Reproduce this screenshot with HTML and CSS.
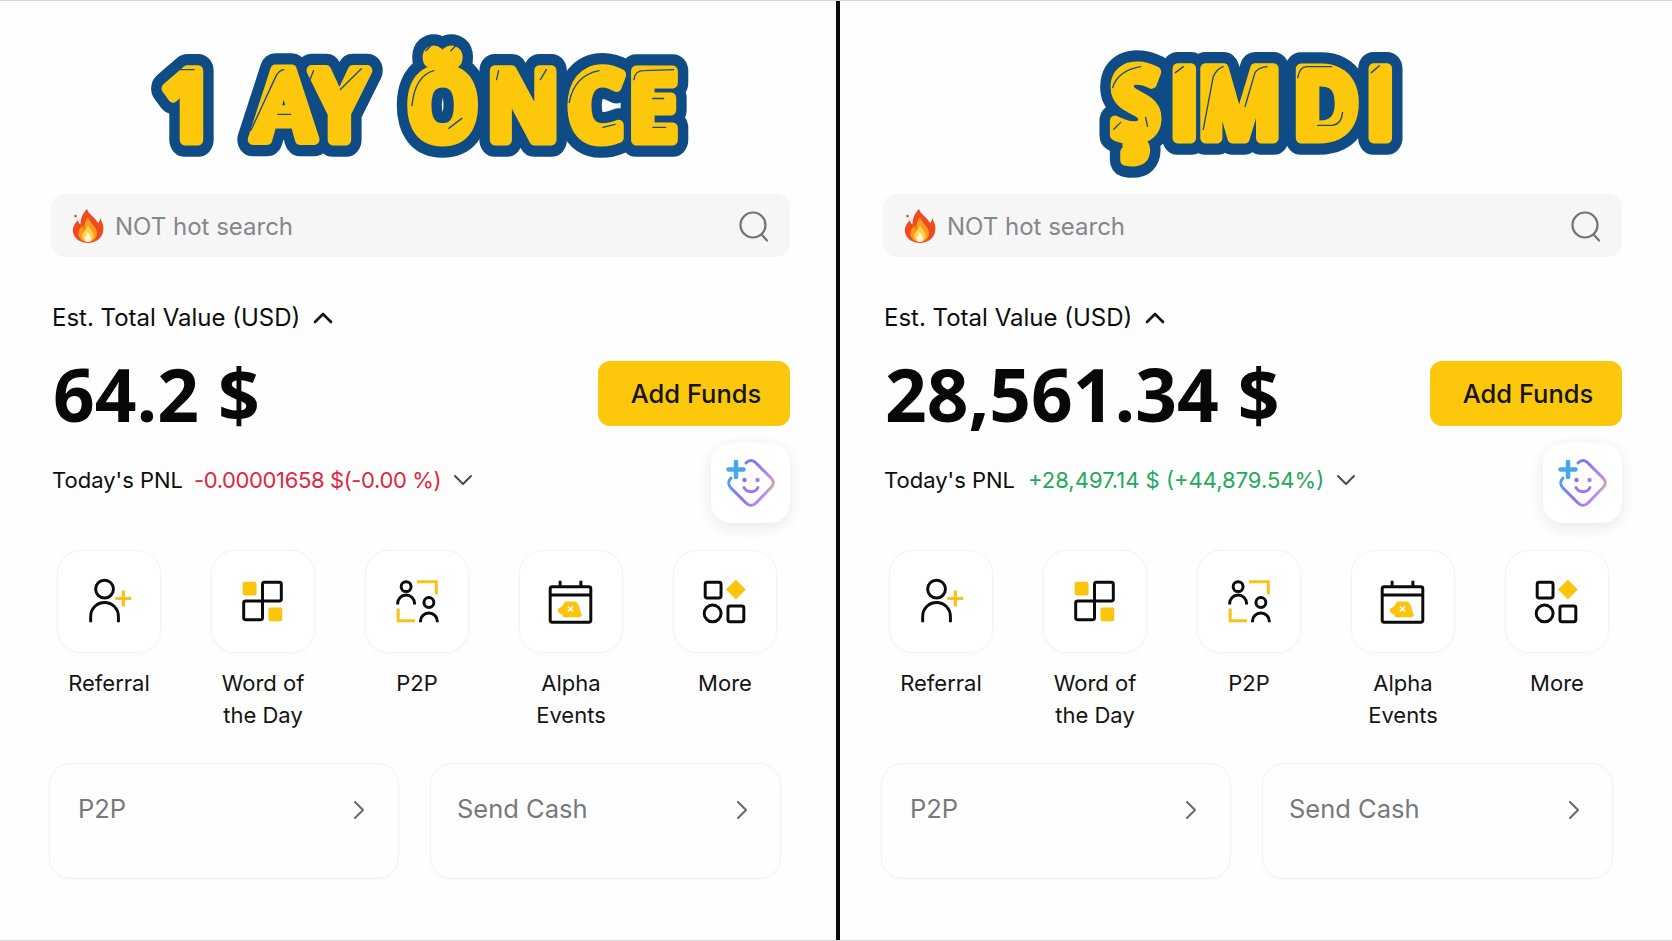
FILE: index.html
```html
<!DOCTYPE html>
<html lang="tr">
<head>
<meta charset="utf-8">
<title>1 Ay Önce / Şimdi</title>
<link rel="stylesheet" href="styles.css">
</head>
<body>
<svg class="sprites" width="0" height="0" aria-hidden="true">
  <defs>
    <linearGradient id="aiGrad" gradientUnits="userSpaceOnUse" x1="16" y1="30" x2="64" y2="50">
      <stop offset="0" stop-color="#45a8ee"/>
      <stop offset=".45" stop-color="#8f6ff0"/>
      <stop offset=".8" stop-color="#b98af0"/>
      <stop offset="1" stop-color="#f3bd6a"/>
    </linearGradient>
    <symbol id="i-flame" viewBox="0 0 32 36">
      <path fill="#ef4b1f" d="M15 1c2 6 8 8 11 14 1.500-1 2-3 2-5 3 5 4 9 3 14-1.500 7-8 11-15 11S2 31 1 24c-.7-5 2-9 5-12 .3 2 1 3.500 2.500 4.500C8.500 10 11 5 15 1z"/>
      <path fill="#fb9a1c" d="M16 9c1 5 8 9 9 15 .8 6-4 10-9.500 10S6 30 6.500 24.500c.3-3 2-5 4-7 0 2 .7 3 2 3.500C12 16.500 13 12.500 16 9z"/>
      <path fill="#ffd54a" d="M16 17c1 4 5 6 5.500 10 .4 4-2.500 7-5.700 7s-6-3-5.500-6.500c.4-3 2.500-4 3.500-6 .6-1.500 1.700-3 2.700-4.500z"/>
      <path fill="#fff8e0" d="M16 24c.6 2.500 3 4 3 6.500 0 2-1.500 3.500-3.200 3.500s-3.300-1.500-3-3.800c.3-2.200 2.400-3.700 3.200-6.200z"/>
      <circle cx="3.500" cy="8" r="1.300" fill="#ef4b1f"/>
    </symbol>
    <symbol id="i-search" viewBox="0 0 32 32">
      <circle cx="15" cy="15" r="12.500" fill="none" stroke="#6f7175" stroke-width="2.200"/>
      <path d="M24 25l5 5.500" fill="none" stroke="#6f7175" stroke-width="2.200" stroke-linecap="round"/>
    </symbol>
    <symbol id="i-up" viewBox="0 0 20 12">
      <path d="M2 10l8-8 8 8" fill="none" stroke="currentColor" stroke-width="2.600" stroke-linecap="round" stroke-linejoin="round"/>
    </symbol>
    <symbol id="i-down" viewBox="0 0 20 12">
      <path d="M2 2l8 8 8-8" fill="none" stroke="currentColor" stroke-width="2" stroke-linecap="round" stroke-linejoin="round"/>
    </symbol>
    <symbol id="i-right" viewBox="0 0 12 20">
      <path d="M2 2l8 8-8 8" fill="none" stroke="currentColor" stroke-width="2" stroke-linecap="round" stroke-linejoin="round"/>
    </symbol>
    <symbol id="i-ai" viewBox="0 0 80 80">
      <path d="M35 19c3-3.500 7-3.500 10 0l15 15c3 3 3 6.500 0 9.500L45 59c-3 3-7 3-10 0L20 44c-3-3-3-7 0-10" fill="none" stroke="url(#aiGrad)" stroke-width="3" stroke-linecap="round"/>
      <path d="M25 18v15M17.500 25.500h15" fill="none" stroke="#45a8ee" stroke-width="4.500" stroke-linecap="round"/>
      <circle cx="33.500" cy="36" r="2.200" fill="#8f6ff0"/>
      <circle cx="46.500" cy="36" r="2.200" fill="#a57ef0"/>
      <path d="M33 43.500c2.500 5.500 11.500 5.500 14 0" fill="none" stroke="#9a74f0" stroke-width="3" stroke-linecap="round"/>
    </symbol>
    <symbol id="i-referral" viewBox="0 0 104 104">
      <circle cx="47.500" cy="39.500" r="9" fill="none" stroke="#0b0b0b" stroke-width="3"/>
      <path d="M33.500 73v-6a14 14 0 0 1 28 0v6" fill="none" stroke="#0b0b0b" stroke-width="3"/>
      <path d="M66.500 41v16M58.500 49h16" fill="none" stroke="#f7c21c" stroke-width="3.200"/>
    </symbol>
    <symbol id="i-word" viewBox="0 0 104 104">
      <rect x="51.500" y="32.500" width="19" height="19" rx="2" fill="none" stroke="#0b0b0b" stroke-width="3"/>
      <rect x="32.500" y="51.500" width="19" height="19" rx="2" fill="none" stroke="#0b0b0b" stroke-width="3"/>
      <rect x="31.500" y="32" width="14" height="14" rx="2" fill="#fcc40a"/>
      <rect x="57.500" y="58" width="14" height="14" rx="2" fill="#fcc40a"/>
    </symbol>
    <symbol id="i-p2p" viewBox="0 0 104 104">
      <circle cx="41" cy="37" r="5" fill="none" stroke="#0b0b0b" stroke-width="3"/>
      <path d="M32.500 55v-1a8.500 8.500 0 0 1 17 0v1" fill="none" stroke="#0b0b0b" stroke-width="3"/>
      <circle cx="64" cy="53" r="5" fill="none" stroke="#0b0b0b" stroke-width="3"/>
      <path d="M55.500 73v-1a8.500 8.500 0 0 1 17 0v1" fill="none" stroke="#0b0b0b" stroke-width="3"/>
      <path d="M52 32h19.500v13" fill="none" stroke="#f7c21c" stroke-width="3"/>
      <path d="M33 59v12.500h17" fill="none" stroke="#f7c21c" stroke-width="3"/>
    </symbol>
    <symbol id="i-alpha" viewBox="0 0 104 104">
      <rect x="31" y="37" width="41" height="36" rx="2" fill="none" stroke="#0b0b0b" stroke-width="3"/>
      <path d="M31 45.500h41M41 31v6M62 31v6" fill="none" stroke="#0b0b0b" stroke-width="3"/>
      <path fill="#fcc40a" d="M46 52h11l3 4 1 4 2 6-2 2H44l-1-3-4-2v-4l4-2z"/>
      <path d="M49 57l5 5M54 57l-5 5" fill="none" stroke="#fff" stroke-width="1.600"/>
    </symbol>
    <symbol id="i-more" viewBox="0 0 104 104">
      <rect x="32" y="32.500" width="16" height="16" rx="2" fill="none" stroke="#0b0b0b" stroke-width="3"/>
      <path d="M63 30l10 10-10 10-10-10z" fill="#fcc40a"/>
      <circle cx="39.500" cy="64" r="8.500" fill="none" stroke="#0b0b0b" stroke-width="3"/>
      <rect x="55" y="56.500" width="16" height="16" rx="2" fill="none" stroke="#0b0b0b" stroke-width="3"/>
    </symbol>
  </defs>
</svg>

<main class="screen">
  <section class="panel panel-left">
    <svg class="banner" viewBox="0 0 836 194" role="img" aria-label="1 AY ÖNCE">
      <defs>
        <text id="title-a" class="banner-text" transform="translate(0 140) scale(1 1.09)" x="160 200 252 311 380 407 487 568 629" y="0">1 AY ÖNCE</text>
      </defs>
      <use href="#title-a" class="layer-outer"/>
      <use href="#title-a" class="layer-inner"/>
      <path class="gloss" d="M164 77Q164 69 172 69L193 69M250 130L275 76Q278 70 283 69M277 114H290M313 70L309 80M340 89L361 68M412 105Q415 75 434 70M449 128L462 118M426 50L432 44M451 50L457 44M497 79L499 70M541 79L547 69M570 102Q575 75 600 70M604 127L616 124M635 79Q636 70 645 70L675 69M654 98H665M654 127H667"/>
    </svg>
    <div class="search">
      <svg class="flame"><use href="#i-flame"/></svg>
      <span class="search-text">NOT hot search</span>
      <svg class="search-icon"><use href="#i-search"/></svg>
    </div>
    <div class="total-label">
      <span>Est. Total Value (USD)</span>
      <svg class="chev-up"><use href="#i-up"/></svg>
    </div>
    <div class="amount-row">
      <span class="amount">64.2 $</span>
      <button class="add-funds" type="button">Add Funds</button>
    </div>
    <div class="pnl-row">
      <div class="pnl">
        <span>Today's PNL</span>
        <span class="loss">-0.00001658 $(-0.00 %)</span>
        <svg class="chev-down"><use href="#i-down"/></svg>
      </div>
      <div class="ai-tile"><svg class="ai-icon"><use href="#i-ai"/></svg></div>
    </div>
    <div class="shortcuts">
      <div class="shortcut"><div class="tile"><svg class="tile-icon"><use href="#i-referral"/></svg></div><span class="shortcut-label">Referral</span></div>
      <div class="shortcut"><div class="tile"><svg class="tile-icon"><use href="#i-word"/></svg></div><span class="shortcut-label">Word of the Day</span></div>
      <div class="shortcut"><div class="tile"><svg class="tile-icon"><use href="#i-p2p"/></svg></div><span class="shortcut-label">P2P</span></div>
      <div class="shortcut"><div class="tile"><svg class="tile-icon"><use href="#i-alpha"/></svg></div><span class="shortcut-label">Alpha Events</span></div>
      <div class="shortcut"><div class="tile"><svg class="tile-icon"><use href="#i-more"/></svg></div><span class="shortcut-label">More</span></div>
    </div>
    <div class="cards">
      <div class="card"><span>P2P</span><svg class="chev-right"><use href="#i-right"/></svg></div>
      <div class="card"><span>Send Cash</span><svg class="chev-right"><use href="#i-right"/></svg></div>
    </div>
  </section>

  <div class="divider"></div>

  <section class="panel panel-right">
    <svg class="banner" viewBox="-2 0 832 194" role="img" aria-label="ŞIMDI">
      <defs>
        <text id="title-b" class="banner-text" transform="translate(0 138) scale(1 1.09)" x="268 327 355 451 524" y="0">ŞIMDI</text>
      </defs>
      <use href="#title-b" class="layer-outer"/>
      <use href="#title-b" class="layer-inner"/>
      <path class="gloss" d="M270 87Q275 70 298 66M271 129L278 122M303 117L305 126M333 72L341 66M361 129L371 76Q375 68 381 66M403 106L413 72Q416 67 425 66M456 77Q458 66 465 66L490 66M476 125L491 125Q500 124 501 112M530 72L538 65"/>
    </svg>
    <div class="search">
      <svg class="flame"><use href="#i-flame"/></svg>
      <span class="search-text">NOT hot search</span>
      <svg class="search-icon"><use href="#i-search"/></svg>
    </div>
    <div class="total-label">
      <span>Est. Total Value (USD)</span>
      <svg class="chev-up"><use href="#i-up"/></svg>
    </div>
    <div class="amount-row">
      <span class="amount">28,561.34 $</span>
      <button class="add-funds" type="button">Add Funds</button>
    </div>
    <div class="pnl-row">
      <div class="pnl">
        <span>Today's PNL</span>
        <span class="gain">+28,497.14 $ (+44,879.54%)</span>
        <svg class="chev-down"><use href="#i-down"/></svg>
      </div>
      <div class="ai-tile"><svg class="ai-icon"><use href="#i-ai"/></svg></div>
    </div>
    <div class="shortcuts">
      <div class="shortcut"><div class="tile"><svg class="tile-icon"><use href="#i-referral"/></svg></div><span class="shortcut-label">Referral</span></div>
      <div class="shortcut"><div class="tile"><svg class="tile-icon"><use href="#i-word"/></svg></div><span class="shortcut-label">Word of the Day</span></div>
      <div class="shortcut"><div class="tile"><svg class="tile-icon"><use href="#i-p2p"/></svg></div><span class="shortcut-label">P2P</span></div>
      <div class="shortcut"><div class="tile"><svg class="tile-icon"><use href="#i-alpha"/></svg></div><span class="shortcut-label">Alpha Events</span></div>
      <div class="shortcut"><div class="tile"><svg class="tile-icon"><use href="#i-more"/></svg></div><span class="shortcut-label">More</span></div>
    </div>
    <div class="cards">
      <div class="card"><span>P2P</span><svg class="chev-right"><use href="#i-right"/></svg></div>
      <div class="card"><span>Send Cash</span><svg class="chev-right"><use href="#i-right"/></svg></div>
    </div>
  </section>
</main>
</body>
</html>
```
FILE: styles.css
```css
* { box-sizing: border-box; }

html, body {
  margin: 0;
  height: 100%;
  background: #fff;
}

body {
  font-family: Inter, "Noto Sans", "Liberation Sans", sans-serif;
  color: #0d0d0d;
  overflow: hidden;
}

.sprites { display: block; width: 0; height: 0; }

.screen {
  display: grid;
  grid-template-columns: 836px 4px 832px;
  height: 941px;
  background: #fefefe;
  border-top: 1px solid #d4d4d4;
  border-bottom: 1px solid #d4d4d4;
}

.divider { background: #0a0a0a; }

.panel { display: flex; flex-direction: column; min-width: 0; }
.panel-left { padding-left: 51px; }
.panel-right { padding-left: 43px; }

.banner {
  display: block;
  flex: none;
  height: 193px;
}
.panel-left .banner { width: 836px; margin-left: -51px; }
.panel-right .banner { width: 832px; margin-left: -43px; }

.banner-text {
  font-family: "Open Sans", Lato, sans-serif;
  font-weight: 700;
  font-size: 90px;
}

.layer-outer {
  fill: #0f4c86;
  stroke: #0f4c86;
  stroke-width: 31px;
  stroke-linejoin: round;
}
.layer-inner {
  fill: #fdc80c;
  stroke: #fdc80c;
  stroke-width: 10px;
  stroke-linejoin: round;
}
.gloss {
  fill: none;
  stroke: #1a4f82;
  stroke-width: 1.4px;
  stroke-linecap: round;
}

.search {
  width: 739px;
  height: 63px;
  flex: none;
  display: flex;
  align-items: center;
  padding: 0 20px 0 21px;
  background: #f6f6f6;
  border-radius: 14px;
}
.flame { width: 32px; height: 36px; flex: none; }
.search-text {
  margin-left: 11px;
  padding-top: 2px;
  flex: 1;
  font-size: 24px;
  color: #85878b;
}
.search-icon { width: 32px; height: 32px; flex: none; }

.total-label {
  margin: 47px 0 0 1px;
  height: 28px;
  display: flex;
  align-items: center;
  font-size: 24px;
  line-height: 28px;
  flex: none;
}
.chev-up { width: 20px; height: 12px; margin-left: 13px; color: #111; }

.amount-row {
  width: 739px;
  height: 65px;
  margin-top: 29px;
  flex: none;
  display: flex;
  align-items: center;
  justify-content: space-between;
}
.amount {
  font-family: "Open Sans", Inter, sans-serif;
  font-size: 73px;
  font-weight: 700;
  line-height: 65px;
  color: #080808;
  margin-left: 2px;
}
.add-funds {
  width: 192px;
  height: 65px;
  border: 0;
  border-radius: 12px;
  background: #fdc70b;
  color: #141414;
  font-family: inherit;
  font-size: 25.5px;
  font-weight: 500;
  padding: 0 0 0 4px;
}

.pnl-row {
  width: 739px;
  height: 80px;
  margin-top: 17px;
  flex: none;
  display: flex;
  align-items: center;
  justify-content: space-between;
}
.pnl {
  display: flex;
  align-items: center;
  gap: 13px;
  font-size: 22px;
  margin: -6px 0 0 1px;
}
.loss { color: #e0263f; letter-spacing: -.38px; margin-left: -2px; }
.gain { color: #23a85c; }
.chev-down { width: 20px; height: 12px; color: #484a4e; margin-left: -1px; }

.ai-tile {
  width: 79px;
  height: 80px;
  flex: none;
  padding-top: 1px;
  background: #fff;
  border-radius: 20px;
  box-shadow: 0 4px 16px rgba(0, 0, 0, .09);
}
.ai-icon { display: block; width: 80px; height: 80px; }

.shortcuts {
  width: 720px;
  margin: 27px 0 0 6px;
  flex: none;
  display: flex;
  justify-content: space-between;
}
.shortcut {
  width: 104px;
  display: flex;
  flex-direction: column;
  align-items: center;
}
.tile {
  width: 104px;
  height: 103px;
  background: #fff;
  border: 1px solid #f3f3f3;
  border-radius: 24px;
  box-shadow: 0 2px 5px rgba(0, 0, 0, .02);
}
.tile-icon { display: block; width: 104px; height: 103px; margin: -1px; }
.shortcut-label {
  margin-top: 14px;
  height: 65px;
  text-align: center;
  font-size: 22px;
  line-height: 32px;
  color: #141414;
}

.cards {
  width: 732px;
  margin: 31px 0 0 -2px;
  flex: none;
  display: flex;
  justify-content: space-between;
}
.card {
  width: 350px;
  height: 116px;
  padding: 30px 33px 0 28px;
  display: flex;
  justify-content: space-between;
  align-items: flex-start;
  background: #fefefe;
  border: 1px solid #f2f2f2;
  border-radius: 22px;
  box-shadow: 0 2px 5px rgba(0, 0, 0, .02);
  font-size: 25.5px;
  line-height: 30px;
  color: #77797d;
}
.card + .card { width: 351px; padding-left: 26px; padding-right: 32px; }
.chev-right { width: 12px; height: 20px; margin-top: 6px; color: #66686c; }
```
